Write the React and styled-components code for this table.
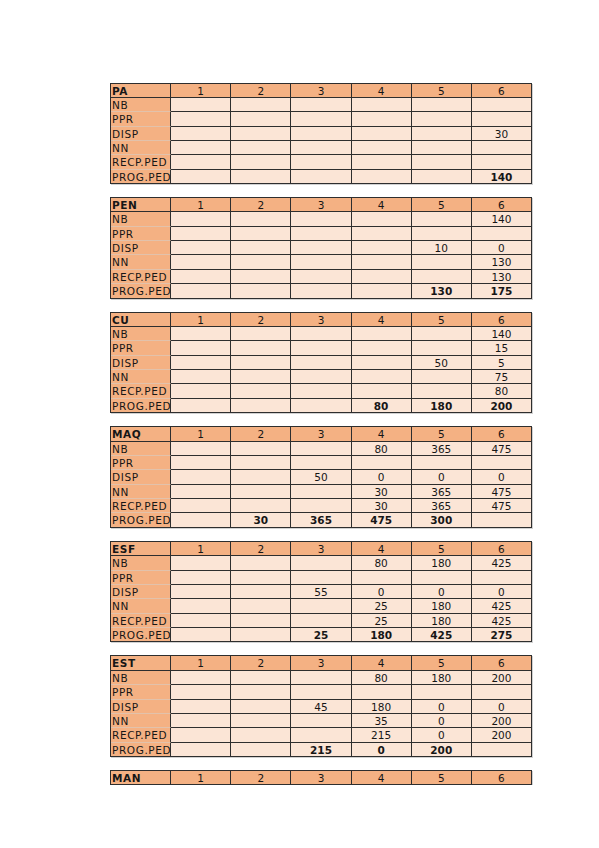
import React from 'react';
import styled, { createGlobalStyle } from 'styled-components';

const GlobalStyle = createGlobalStyle`
  html, body {
    margin: 0;
    padding: 0;
    background: #fff;
  }
`;

const COLS = [1, 2, 3, 4, 5, 6];
const ROW_NAMES = ['NB', 'PPR', 'DISP', 'NN', 'RECP.PED', 'PROG.PED'];

// valores por linha, índice = coluna 1..6
const sheets = [
  {
    name: 'PA',
    rows: [
      [],
      [],
      [, , , , , '30'],
      [],
      [],
      [, , , , , '140'],
    ],
  },
  {
    name: 'PEN',
    rows: [
      [, , , , , '140'],
      [],
      [, , , , '10', '0'],
      [, , , , , '130'],
      [, , , , , '130'],
      [, , , , '130', '175'],
    ],
  },
  {
    name: 'CU',
    rows: [
      [, , , , , '140'],
      [, , , , , '15'],
      [, , , , '50', '5'],
      [, , , , , '75'],
      [, , , , , '80'],
      [, , , '80', '180', '200'],
    ],
  },
  {
    name: 'MAQ',
    rows: [
      [, , , '80', '365', '475'],
      [],
      [, , '50', '0', '0', '0'],
      [, , , '30', '365', '475'],
      [, , , '30', '365', '475'],
      [, '30', '365', '475', '300'],
    ],
  },
  {
    name: 'ESF',
    rows: [
      [, , , '80', '180', '425'],
      [],
      [, , '55', '0', '0', '0'],
      [, , , '25', '180', '425'],
      [, , , '25', '180', '425'],
      [, , '25', '180', '425', '275'],
    ],
  },
  {
    name: 'EST',
    rows: [
      [, , , '80', '180', '200'],
      [],
      [, , '45', '180', '0', '0'],
      [, , , '35', '0', '200'],
      [, , , '215', '0', '200'],
      [, , '215', '0', '200'],
    ],
  },
  { name: 'MAN', rows: [] },
];

const Page = styled.div`
  padding: 82.5px 0 0 110px;
  display: flex;
  flex-direction: column;
  gap: 13.2px;
  font-family: 'DejaVu Sans', 'Liberation Sans', sans-serif;
  font-size: 10.5px;
  color: #161616;
`;

const Sheet = styled.div`
  width: 422px;
  box-sizing: border-box;
  display: grid;
  grid-template-columns: repeat(7, 1fr);
  grid-auto-rows: 14.35px;
  border-left: 1px solid #2e2e2e;
  border-top: 1px solid #2e2e2e;
  box-shadow: 1px 1px 0 rgba(0, 0, 0, 0.18);
`;

const Cell = styled.div`
  box-sizing: border-box;
  border-right: 1px solid #2e2e2e;
  border-bottom: 1px solid
    ${({ $soft }) => ($soft ? '#e2c2ab' : '#2e2e2e')};
  background: ${({ $head }) => ($head ? '#f4b183' : '#fbe5d6')};
  font-weight: ${({ $bold }) => ($bold ? 700 : 400)};
  text-align: ${({ $left }) => ($left ? 'left' : 'center')};
  padding-left: ${({ $left }) => ($left ? '1px' : '0')};
  letter-spacing: ${({ $left }) => ($left ? '0.6px' : 'normal')};
  line-height: 14px;
  white-space: nowrap;
  overflow: hidden;
`;

const Table = ({ sheet }) => (
  <Sheet>
    <Cell $head $left $bold>
      {sheet.name}
    </Cell>
    {COLS.map((c) => (
      <Cell key={c} $head>
        {c}
      </Cell>
    ))}
    {sheet.rows.map((row, r) => {
      const last = r === ROW_NAMES.length - 1;
      return (
        <React.Fragment key={r}>
          <Cell $head $left $soft={!last}>
            {ROW_NAMES[r]}
          </Cell>
          {COLS.map((c) => (
            <Cell key={c} $bold={last}>
              {row[c - 1] || ''}
            </Cell>
          ))}
        </React.Fragment>
      );
    })}
  </Sheet>
);

const App = () => (
  <>
    <GlobalStyle />
    <Page>
      {sheets.map((s) => (
        <Table key={s.name} sheet={s} />
      ))}
    </Page>
  </>
);

export default App;
